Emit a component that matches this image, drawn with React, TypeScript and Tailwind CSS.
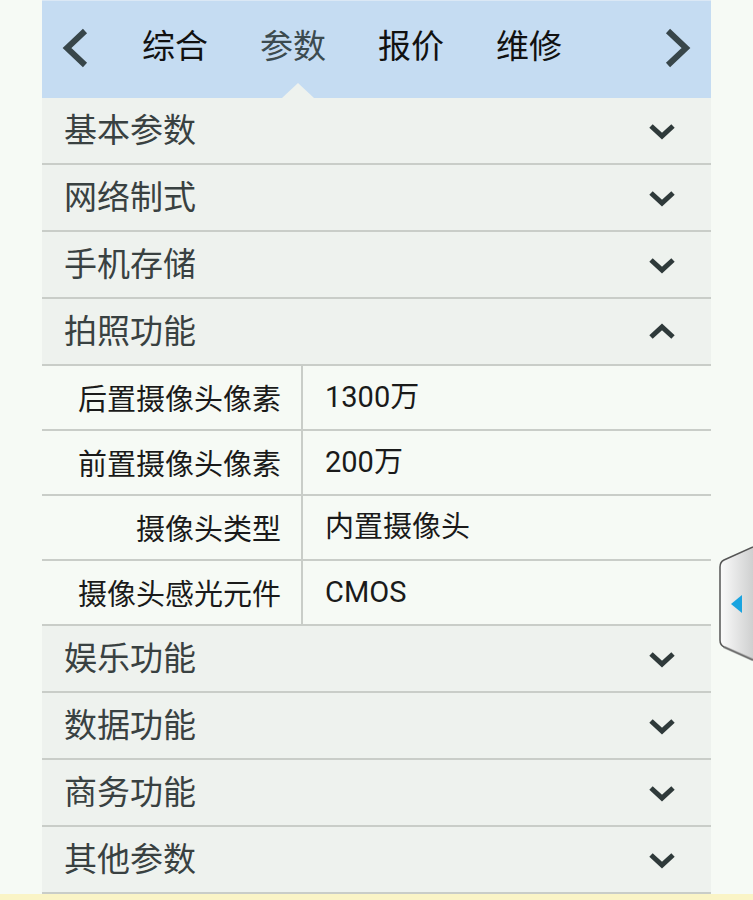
const font = { fontFamily: '"Noto Sans CJK SC", sans-serif' };

const tabs = ["综合", "参数", "报价", "维修"];

const groups: { title: string; open?: boolean }[] = [
	{ title: "基本参数" },
	{ title: "网络制式" },
	{ title: "手机存储" },
	{ title: "拍照功能", open: true },
];

const groupsAfter = ["娱乐功能", "数据功能", "商务功能", "其他参数"];

const specs = [
	["后置摄像头像素", "1300万"],
	["前置摄像头像素", "200万"],
	["摄像头类型", "内置摄像头"],
	["摄像头感光元件", "CMOS"],
];

function Chevron({ up }: { up?: boolean }) {
	return (
		<svg width="28" height="18" viewBox="0 0 28 18" className={up ? "rotate-180" : ""}>
			<path d="M3 4 L14 14 L25 4" fill="none" stroke="#2f3a3a" strokeWidth="5" strokeLinejoin="miter" />
		</svg>
	);
}

function NavArrow({ right }: { right?: boolean }) {
	return (
		<svg width="28" height="40" viewBox="0 0 28 40">
			<path
				d={right ? "M5 3 L23 20 L5 37" : "M23 3 L5 20 L23 37"}
				fill="none"
				stroke="#38464a"
				strokeWidth="6"
			/>
		</svg>
	);
}

function GroupRow({ title, open }: { title: string; open?: boolean }) {
	return (
		<div className="flex h-[67px] items-center justify-between border-b-2 border-[#c9cdc8] bg-[#eef2ee] pl-[22px] pr-[35px]">
			<span className="mb-[5px] text-[33px] leading-none text-[#394141]">{title}</span>
			<Chevron up={open} />
		</div>
	);
}

export default function App() {
	return (
		<div className="relative flex min-h-[900px] flex-col bg-[#f6faf5]" style={font}>
			<div className="ml-[42px] w-[669px]">
				<div className="relative flex h-[98px] items-center border-t border-[#dbe8f5] bg-[#c5dcf2] pb-[4px] pl-[20px] pr-[20px]">
					<NavArrow />
					<div className="mb-[6px] ml-[52px] flex gap-[52px]">
						{tabs.map((t) => (
							<span
								key={t}
								className={`text-[33px] leading-none ${t === "参数" ? "text-[#3c4b4f]" : "text-[#111]"}`}
							>
								{t}
							</span>
						))}
					</div>
					<div className="ml-auto">
						<NavArrow right />
					</div>
					<svg className="absolute bottom-0 left-[240px]" width="32" height="15" viewBox="0 0 32 15">
						<path d="M0 15 L16 0 L32 15 Z" fill="#eef2ee" />
					</svg>
				</div>
				{groups.map((g) => (
					<GroupRow key={g.title} title={g.title} open={g.open} />
				))}
				{specs.map(([k, v]) => (
					<div key={k} className="flex h-[65px] border-b-2 border-[#c9cdc8] bg-[#f6faf5]">
						<div className="flex w-[261px] items-center justify-end border-r-2 border-[#c9cdc8] pr-[20px] text-[29px] leading-none text-[#1a1a1a]">
							{k}
						</div>
						<div
							className="flex items-center pl-[22px] text-[29px] leading-none text-[#1a1a1a]"
							style={{ fontFamily: 'Roboto, "Noto Sans CJK SC", sans-serif' }}
						>
							{v}
						</div>
					</div>
				))}
				{groupsAfter.map((t) => (
					<GroupRow key={t} title={t} />
				))}
			</div>
			<div className="flex-1 bg-[#faf4c6]" />
			<svg className="absolute left-[718px] top-[544px]" width="35" height="120" viewBox="0 0 35 120">
				<defs>
					<linearGradient id="tabg" x1="0" x2="1" y1="0" y2="0">
						<stop offset="0" stopColor="#fbfbfb" />
						<stop offset="1" stopColor="#cfd0d0" />
					</linearGradient>
				</defs>
				<path
					d="M35 3 L6 16 Q2 18 2 23 L2 96 Q2 101 6 103 L35 116"
					fill="url(#tabg)"
					stroke="#555"
					strokeWidth="1.5"
				/>
				<path d="M35 116 L6 103" stroke="#888" strokeWidth="3" opacity="0.5" />
				<path d="M24 51 L13 60 L24 69 Z" fill="#19a4e0" />
			</svg>
		</div>
	);
}
